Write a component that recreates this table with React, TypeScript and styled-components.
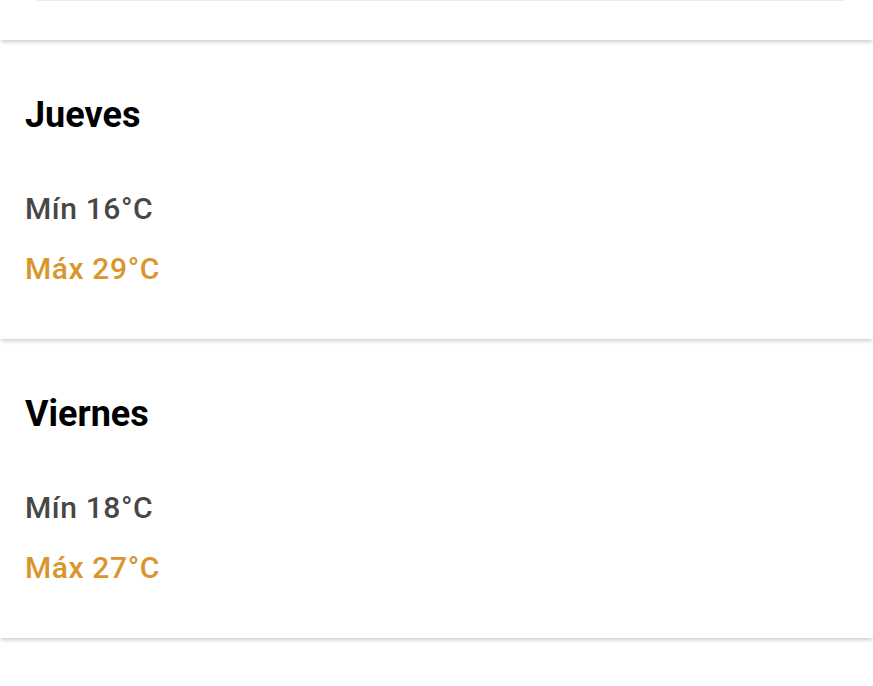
import React from "react";
import styled, { createGlobalStyle } from "styled-components";

const GlobalStyle = createGlobalStyle`
  body {
    margin: 0;
    background: #ffffff;
    font-family: Roboto, "Noto Sans", sans-serif;
  }
`;

const Page = styled.div`
  width: 873px;
  height: 686px;
  overflow: hidden;
  display: flex;
  flex-direction: column;
`;

const TopCard = styled.div`
  height: 40px;
  flex-shrink: 0;
  padding: 0 28px 0 37px;
  box-shadow: 0 3px 4px -1px rgba(0, 0, 0, 0.2);
  position: relative;
  z-index: 3;
`;

const Divider = styled.div`
  height: 1px;
  background: #ececec;
`;

const DayCard = styled.section<{ $layer: number }>`
  height: 298px;
  flex-shrink: 0;
  padding: 0 25px;
  margin-top: 1px;
  box-sizing: border-box;
  box-shadow: 0 3px 4px -1px rgba(0, 0, 0, 0.2);
  position: relative;
  z-index: ${(p) => p.$layer};
  display: flex;
  flex-direction: column;
`;

const DayName = styled.h2`
  margin: 54px 0 0;
  font-size: 36px;
  font-weight: 700;
  line-height: 40px;
  color: #000000;
`;

const Temp = styled.div<{ $max?: boolean }>`
  font-size: 30px;
  font-weight: 500;
  letter-spacing: 0.6px;
  line-height: 34px;
  color: ${(p) => (p.$max ? "#d9962f" : "#474747")};
  margin-top: ${(p) => (p.$max ? "26px" : "57px")};
`;

type Day = { name: string; min: number; max: number };

const days: Day[] = [
  { name: "Jueves", min: 16, max: 29 },
  { name: "Viernes", min: 18, max: 27 },
];

export default function App() {
  return (
    <Page>
      <GlobalStyle />
      <TopCard>
        <Divider />
      </TopCard>
      {days.map((d, i) => (
        <DayCard key={d.name} $layer={2 - i}>
          <DayName>{d.name}</DayName>
          <Temp>Mín {d.min}°C</Temp>
          <Temp $max>Máx {d.max}°C</Temp>
        </DayCard>
      ))}
    </Page>
  );
}
